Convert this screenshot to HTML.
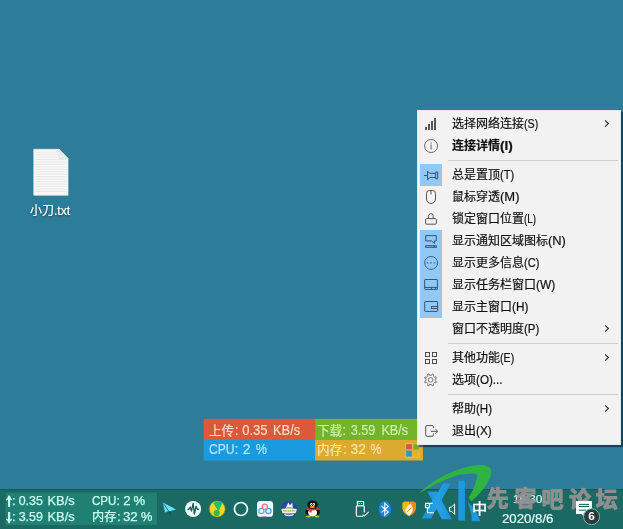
<!DOCTYPE html>
<html lang="zh-CN"><head><meta charset="utf-8"><title>Desktop</title>
<style>
html,body{margin:0;padding:0}
body{width:623px;height:529px;overflow:hidden;background:#2D7D9A;font-family:"Liberation Sans","Noto Sans CJK SC",sans-serif;position:relative}
#desktop{position:absolute;left:0;top:0;width:623px;height:529px;overflow:hidden;background:#2D7D9A}
svg{overflow:visible}
svg.tx{position:absolute;font-family:"Liberation Sans","Noto Sans CJK SC",sans-serif;will-change:transform}
#menu{position:absolute;left:417px;top:110px;width:202px;height:333px;background:#F2F2F2;border:1px solid #dfe8ec;box-shadow:2px 2px 1px rgba(10,30,45,.6)}
.mi{position:absolute;left:2px;width:198px;height:22px}
.chk{position:absolute;left:0;top:0;width:22px;height:22px;background:#90C8F6}
.ic{position:absolute;left:0;top:0}
.arr{position:absolute;left:184px;top:6px}
.sep{position:absolute;left:30px;width:170px;height:1px;background:#cfcfcf}
#file{position:absolute;left:0;top:0}
#fw{position:absolute;left:0;top:0}
#tb{position:absolute;left:0;top:489px;width:623px;height:40px;background:#1A6962;box-shadow:inset 0 1px 0 #125c5e}

</style></head>
<body>
<div id="desktop">
<div id="file">
<svg width="36" height="48" style="position:absolute;left:33px;top:148px"><path d="M.8 1.3H26L35 10.5V47.2H.8Z" fill="#f8f8f8" stroke="#e2e6e9" stroke-width=".8"/><path d="M2.6 4.2H24.5" stroke="#e6e6e6" stroke-width=".9"/><path d="M2.6 6.7H24.5" stroke="#e6e6e6" stroke-width=".9"/><path d="M2.6 9.1H24.5" stroke="#e6e6e6" stroke-width=".9"/><path d="M2.6 11.6H33.2" stroke="#e6e6e6" stroke-width=".9"/><path d="M2.6 14.0H33.2" stroke="#e6e6e6" stroke-width=".9"/><path d="M2.6 16.4H33.2" stroke="#e6e6e6" stroke-width=".9"/><path d="M2.6 18.9H33.2" stroke="#e6e6e6" stroke-width=".9"/><path d="M2.6 21.4H33.2" stroke="#e6e6e6" stroke-width=".9"/><path d="M2.6 23.8H33.2" stroke="#e6e6e6" stroke-width=".9"/><path d="M2.6 26.2H33.2" stroke="#e6e6e6" stroke-width=".9"/><path d="M2.6 28.7H33.2" stroke="#e6e6e6" stroke-width=".9"/><path d="M2.6 31.2H33.2" stroke="#e6e6e6" stroke-width=".9"/><path d="M2.6 33.6H33.2" stroke="#e6e6e6" stroke-width=".9"/><path d="M2.6 36.1H33.2" stroke="#e6e6e6" stroke-width=".9"/><path d="M2.6 38.5H33.2" stroke="#e6e6e6" stroke-width=".9"/><path d="M2.6 41.0H33.2" stroke="#e6e6e6" stroke-width=".9"/><path d="M2.6 43.4H33.2" stroke="#e6e6e6" stroke-width=".9"/><path d="M26 1.3V10.5H35Z" fill="#ececec" stroke="#d8dadc" stroke-width=".6"/></svg>
<svg class="tx" style="left:30px;top:203px;filter:drop-shadow(0 1px 1.2px rgba(0,0,0,.45))" width="42" height="17" fill="#fff"><text x="0.00" y="12" font-size="12" textLength="24" lengthAdjust="spacingAndGlyphs" stroke="#fff" stroke-width="0.2">小刀</text><text x="24.00" y="12" font-size="12" textLength="16.2" lengthAdjust="spacingAndGlyphs" stroke="#fff" stroke-width="0.2">.txt</text></svg>
</div>
<div id="fw">
<svg class="tx" style="left:0;top:0" width="623" height="529"><rect x="203.7" y="418.8" width="111.4" height="21.2" fill="#D9593A"/><rect x="315.1" y="418.8" width="107.9" height="21.2" fill="#74B42B"/><rect x="203.7" y="440.0" width="111.4" height="20.5" fill="#1A9BE0"/><rect x="315.1" y="440.0" width="107.9" height="20.5" fill="#DCAA2E"/><rect x="405.9" y="443.8" width="13.4" height="13.7" fill="#E0B436" stroke="#D9C070" stroke-width=".8"/><rect x="406.2" y="444.2" width="5.7" height="5" fill="#D9553A"/><rect x="413.5" y="444.2" width="5.4" height="5.4" fill="#6FAE2E"/><rect x="406.2" y="450.7" width="5.7" height="5.8" fill="#1E9AE0"/><rect x="413.5" y="450.7" width="5.4" height="5.8" fill="#E2B233"/></svg>
<svg class="tx" style="left:209.0px;top:421.67px;" width="93" height="19" fill="#FBDCC9"><text x="0.00" y="13.33" font-size="12.6" textLength="25.2" lengthAdjust="spacingAndGlyphs" stroke="#FBDCC9" stroke-width="0.15">上传</text><text x="25.70" y="13.33" font-size="13.9" textLength="3.9" lengthAdjust="spacingAndGlyphs" stroke="#FBDCC9" stroke-width="0.15">:</text><text x="33.20" y="13.33" font-size="13.9" textLength="25.3" lengthAdjust="spacingAndGlyphs" stroke="#FBDCC9" stroke-width="0.15">0.35</text><text x="64.10" y="13.33" font-size="13.9" textLength="27.0" lengthAdjust="spacingAndGlyphs" stroke="#FBDCC9" stroke-width="0.15">KB/s</text></svg>
<svg class="tx" style="left:317.3px;top:421.67px;" width="92" height="19" fill="#CDEFB0"><text x="0.00" y="13.33" font-size="12.6" textLength="25.2" lengthAdjust="spacingAndGlyphs" stroke="#CDEFB0" stroke-width="0.15">下载</text><text x="25.30" y="13.33" font-size="13.9" textLength="3.9" lengthAdjust="spacingAndGlyphs" stroke="#CDEFB0" stroke-width="0.15">:</text><text x="33.70" y="13.33" font-size="13.9" textLength="24.7" lengthAdjust="spacingAndGlyphs" stroke="#CDEFB0" stroke-width="0.15">3.59</text><text x="64.40" y="13.33" font-size="13.9" textLength="26.6" lengthAdjust="spacingAndGlyphs" stroke="#CDEFB0" stroke-width="0.15">KB/s</text></svg>
<svg class="tx" style="left:209.2px;top:440.67px;" width="59" height="19" fill="#B9E6FA"><text x="0.00" y="13.33" font-size="13.9" textLength="25.6" lengthAdjust="spacingAndGlyphs" stroke="#B9E6FA" stroke-width="0.15">CPU</text><text x="25.50" y="13.33" font-size="13.9" textLength="3.9" lengthAdjust="spacingAndGlyphs" stroke="#B9E6FA" stroke-width="0.15">:</text><text x="33.70" y="13.33" font-size="13.9" textLength="7.8" lengthAdjust="spacingAndGlyphs" stroke="#B9E6FA" stroke-width="0.15">2</text><text x="46.70" y="13.33" font-size="13.9" textLength="11.2" lengthAdjust="spacingAndGlyphs" stroke="#B9E6FA" stroke-width="0.15">%</text></svg>
<svg class="tx" style="left:316.7px;top:440.97px;" width="66" height="19" fill="#FBE7A8"><text x="0.00" y="13.33" font-size="12.6" textLength="25.2" lengthAdjust="spacingAndGlyphs" stroke="#FBE7A8" stroke-width="0.15">内存</text><text x="25.90" y="13.33" font-size="13.9" textLength="3.9" lengthAdjust="spacingAndGlyphs" stroke="#FBE7A8" stroke-width="0.15">:</text><text x="33.60" y="13.33" font-size="13.9" textLength="15.2" lengthAdjust="spacingAndGlyphs" stroke="#FBE7A8" stroke-width="0.15">32</text><text x="53.60" y="13.33" font-size="13.9" textLength="10.9" lengthAdjust="spacingAndGlyphs" stroke="#FBE7A8" stroke-width="0.15">%</text></svg>
</div>
<div id="tb">
<svg class="tx" style="left:0;top:0" width="160" height="40"><rect x="5.6" y="3.6" width="151.4" height="32.5" fill="#218074"/></svg>
<svg class="tx" style="left:0;top:0" width="20" height="40" viewBox="0 489 20 40" fill="none" stroke="#C8FFF0"><path d="M9.1 507V497" stroke-width="2.1"/><path d="M6.4 499.7Q8.7 498.8 9.1 495.7Q9.5 498.8 11.8 499.7" stroke-width="1.5"/><path d="M9.1 512V521.8" stroke-width="2.1"/><path d="M6.4 519.1Q8.7 520 9.1 523.1Q9.5 520 11.8 519.1" stroke-width="1.5"/></svg>
<svg class="tx" style="left:12.1px;top:3.3699999999999886px;" width="64" height="19" fill="#C8FFF0"><text x="0.00" y="13.33" font-size="12.6" textLength="3.5" lengthAdjust="spacingAndGlyphs" stroke="#C8FFF0" stroke-width="0.25">:</text><text x="6.70" y="13.33" font-size="12.6" textLength="24.2" lengthAdjust="spacingAndGlyphs" stroke="#C8FFF0" stroke-width="0.25">0.35</text><text x="35.50" y="13.33" font-size="12.6" textLength="27.2" lengthAdjust="spacingAndGlyphs" stroke="#C8FFF0" stroke-width="0.25">KB/s</text></svg>
<svg class="tx" style="left:12.1px;top:19.469999999999956px;" width="64" height="19" fill="#C8FFF0"><text x="0.00" y="13.33" font-size="12.6" textLength="3.5" lengthAdjust="spacingAndGlyphs" stroke="#C8FFF0" stroke-width="0.25">:</text><text x="6.70" y="13.33" font-size="12.6" textLength="24.2" lengthAdjust="spacingAndGlyphs" stroke="#C8FFF0" stroke-width="0.25">3.59</text><text x="35.50" y="13.33" font-size="12.6" textLength="27.2" lengthAdjust="spacingAndGlyphs" stroke="#C8FFF0" stroke-width="0.25">KB/s</text></svg>
<svg class="tx" style="left:92.0px;top:3.3699999999999886px;" width="55" height="19" fill="#C8FFF0"><text x="0.00" y="13.33" font-size="12.6" textLength="27.6" lengthAdjust="spacingAndGlyphs" stroke="#C8FFF0" stroke-width="0.25">CPU:</text><text x="31.20" y="13.33" font-size="12.6" textLength="7.4" lengthAdjust="spacingAndGlyphs" stroke="#C8FFF0" stroke-width="0.25">2</text><text x="41.60" y="13.33" font-size="12.6" textLength="11.6" lengthAdjust="spacingAndGlyphs" stroke="#C8FFF0" stroke-width="0.25">%</text></svg>
<svg class="tx" style="left:91.8px;top:19.469999999999956px;" width="62" height="19" fill="#C8FFF0"><text x="0.00" y="13.33" font-size="12.2" textLength="24.4" lengthAdjust="spacingAndGlyphs" stroke="#C8FFF0" stroke-width="0.25">内存</text><text x="25.00" y="13.33" font-size="12.6" textLength="3.7" lengthAdjust="spacingAndGlyphs" stroke="#C8FFF0" stroke-width="0.25">:</text><text x="30.90" y="13.33" font-size="12.6" textLength="14.8" lengthAdjust="spacingAndGlyphs" stroke="#C8FFF0" stroke-width="0.25">32</text><text x="49.10" y="13.33" font-size="12.6" textLength="11.4" lengthAdjust="spacingAndGlyphs" stroke="#C8FFF0" stroke-width="0.25">%</text></svg>
</div>
<svg class="tx" style="left:0;top:0;opacity:.94" width="623" height="529"><defs><linearGradient id="wb" x1="0" y1="0" x2="1" y2="0"><stop offset="0" stop-color="#1B93DF"/><stop offset=".5" stop-color="#25A6F0"/><stop offset="1" stop-color="#1B93DF"/></linearGradient></defs><path d="M418 494Q430 483 444 475.6Q459 468.2 473 465.4Q484 463.6 489 467Q492.6 470.2 490.4 476.4Q488 483 483 489.6Q478 496 471.4 501.2L468.6 497.4Q472.4 492 474 487.6Q476.6 480.6 477.2 476.6Q477.4 473.2 472.6 473.4Q466 473.6 458 475Q447 478.4 437 483.6Q426 489.6 418 494Z" fill="#2FB83A"/><path d="M427.3 491.5H436.9L451.9 519.2H441.8Z" fill="url(#wb)"/><path d="M443.2 483.6H451.2L430.9 518.6H421.5Z" fill="url(#wb)"/><path d="M458.3 480.7H464.9V520.6H458.3Z" fill="#1E9CE8"/><path d="M467.4 502Q476 508 480.2 521.2H471.8Q471.4 510 467.4 502Z" fill="#1E9CE8"/></svg>
<svg class="tx" style="left:0;top:0" width="623" height="529"><path d="M162.3 501.8L176.7 509.4L170.4 511.5L170.5 515.7L168.4 511.2L164.9 513.1Z" fill="#62E5F6" stroke="#12494f" stroke-width=".5" stroke-linejoin="round"/><path d="M163.6 503.6L168.5 511" fill="none" stroke="#15535a" stroke-width=".8"/><path d="M168.4 511.1L170.5 515.8L170.5 511.5Z" fill="#0d3f45"/><circle cx="193.1" cy="509" r="8" fill="#F3FFFC"/><path d="M187.4 509.2h1.6l1.2-2.2l1.3 4l1.6-7.6l1.3 10.8l1.7-8l1.2 3h1.6" fill="none" stroke="#1d5f5d" stroke-width="1.35" stroke-linejoin="round"/><circle cx="217.2" cy="509" r="8" fill="#FAD71E" stroke="#4f9a2a" stroke-width=".6"/><circle cx="216.7" cy="513.1" r="3.1" fill="#22BD68"/><path d="M213.4 503Q218 500.2 222.6 502.2L219.3 509.9L217.8 511L217.2 509.6Z" fill="#22BD68"/><circle cx="240.9" cy="509" r="6.5" fill="none" stroke="#E9FFFA" stroke-width="1.7"/><rect x="257" y="501" width="16.1" height="15.8" rx="3.4" fill="#F2FCFF"/><circle cx="261.4" cy="511" r="2.6" fill="#e8f4ff" stroke="#62B0F4" stroke-width="1.3"/><circle cx="268.4" cy="511" r="2.6" fill="#e8f4ff" stroke="#4C9CEE" stroke-width="1.3"/><circle cx="264.8" cy="506.7" r="2.6" fill="#ffe9ec" stroke="#F0788F" stroke-width="1.3"/><rect x="262.6" y="516.3" width="4" height=".9" fill="#c9727a"/><circle cx="289.1" cy="509" r="8" fill="#2A47A8"/><path d="M285.4 508.6L288.4 502.4L290 505.2L292.4 502.6L292.8 508.6Z" fill="#fbeef0"/><path d="M286.8 507.4h4.6v1.6h-4.6z" fill="#9a5a3a"/><path d="M281.3 508.9Q289 507.8 296.9 508.9L295.8 513Q289 514 282.4 513Z" fill="#F6F3D6"/><path d="M283 510.9h12.2" stroke="#7fae3a" stroke-width="1.1" stroke-dasharray="1.6 .7"/><path d="M283.8 513.8Q289 515.6 294.4 513.8L293 515.6Q289 517 285 515.6Z" fill="#eef0dc"/><ellipse cx="312.6" cy="512" rx="7.3" ry="4.6" fill="#111"/><ellipse cx="312.6" cy="504.6" rx="5.3" ry="4" fill="#111"/><ellipse cx="312.6" cy="512.8" rx="4.4" ry="3.7" fill="#fff"/><ellipse cx="308.4" cy="516.5" rx="2.4" ry=".9" fill="#B9C92B"/><ellipse cx="316.9" cy="516.5" rx="2.4" ry=".9" fill="#B9C92B"/><path d="M306.6 508Q312.6 509.4 318.8 508L319 509.8Q312.6 511 311.8 510.4L311.6 512.4L309.4 512.2L309.6 510.4L306.5 509.8Z" fill="#E8352C"/><ellipse cx="311.3" cy="504.4" rx="1.1" ry="1.4" fill="#fff"/><ellipse cx="313.9" cy="504.4" rx="1.1" ry="1.4" fill="#fff"/><circle cx="311.6" cy="504.6" r=".5" fill="#111"/><circle cx="313.6" cy="504.6" r=".5" fill="#111"/><ellipse cx="312.4" cy="507" rx="2.6" ry="1" fill="#F5A21E"/><path d="M357.4 505.6V501.5H363.6V505.6" fill="none" stroke="#fff" stroke-width="1.15"/><path d="M358.6 502.9h1v1h-1zM361 502.9h1v1h-1z" fill="#fff"/><path d="M363 516.2H357.3a1 1 0 0 1-1-1V506.8a1 1 0 0 1 1-1H363.3a1 1 0 0 1 1 1V512.6" fill="none" stroke="#fff" stroke-width="1.15"/><path d="M362.5 514.6L364.3 516.1L368.7 511.9" fill="none" stroke="#e8f4f2" stroke-width="1.1"/><ellipse cx="384.9" cy="509.2" rx="6.2" ry="8.2" fill="#1B82E8"/><path d="M381.5 506L388.2 512L384.8 515.2V503.2L388.2 506.4L381.5 512.4" fill="none" stroke="#fff" stroke-width="1.1" stroke-linejoin="miter"/><path d="M402.4 502.6Q403.8 502.6 404.4 501.5H409.2V516.4Q403 513.6 402.4 508.6Z" fill="#F8B718"/><path d="M416 502.6Q414.6 502.6 414 501.5H409.2V516.4Q415.4 513.6 416 508.6Z" fill="#EF8B1E"/><path d="M410.4 503.4Q413.6 507.6 412.4 511.6Q411.2 514.4 409.2 515.4Q405.4 513.6 405.4 510.6Q405.8 507 410.4 503.4Z" fill="#FFF6E4"/><path d="M407 512.2L411.4 507.6" stroke="#EF8B1E" stroke-width=".9"/><path d="M432.6 503.4H425.5V507.6H429.4V503.4M427.5 507.6V512.8H434" fill="none" stroke="#fff" stroke-width="1.1"/><path d="M426.6 505.4h1.8" stroke="#fff" stroke-width="1"/><path d="M449.5 507.2H451.4L454.6 504V514.4L451.4 511.2H449.5Z" fill="none" stroke="#fff" stroke-width="1"/></svg>
<svg class="tx" style="left:472.3px;top:499.00000000000006px;" width="17" height="21" fill="#fff"><text x="0.00" y="15.2" font-size="15.2" stroke="#fff" stroke-width="0.4">中</text></svg>
<svg class="tx" style="left:512.6px;top:491.40000000000003px;" width="31" height="17" fill="#DFFFFA"><text x="0.00" y="12.2" font-size="11.2" textLength="29.4" lengthAdjust="spacingAndGlyphs" stroke="#DFFFFA" stroke-width="0.15">16:30</text></svg>
<svg class="tx" style="left:501.7px;top:510.7px;" width="53" height="17" fill="#DFFFFA"><text x="0.00" y="12.2" font-size="12.2" textLength="51.4" lengthAdjust="spacingAndGlyphs" stroke="#DFFFFA" stroke-width="0.2">2020/8/6</text></svg>
<svg class="tx wmt" style="left:0;top:0" width="623" height="529" fill="#969094" stroke="#969094" stroke-width="1" stroke-linejoin="round" opacity=".95"><text x="486.65" y="505.86" font-size="22" font-weight="700">先</text><text x="514.39" y="505.94" font-size="22" font-weight="700">客</text><text x="541.62" y="506.5" font-size="22" font-weight="700">吧</text><text x="568.96" y="506.60" font-size="22" font-weight="700">论</text><text x="595.68" y="506.5" font-size="22" font-weight="700">坛</text></svg>
<svg class="tx" style="left:0;top:0" width="623" height="529"><path d="M576 501.1H591.9V514.1H584.6L583.6 516.2L581.4 514.1H576Z" fill="#F6FFFD"/><path d="M579 504.4H589M579 506.5H589M579 510.2H586" stroke="#1a5a5a" stroke-width="1"/><circle cx="591.6" cy="516.7" r="8" fill="#2C3A3D" stroke="#78C4B6" stroke-width=".9"/><text x="588.3" y="520.2" font-size="10.5" font-weight="700" fill="#fff" textLength="6.6" lengthAdjust="spacingAndGlyphs">6</text></svg>
<div id="menu">
<div class="mi" style="top:2px">
<svg class="ic" width="22" height="22"><path d="M5 14h2v3h-2zM8 11h2v6h-2zM11 8h2v9h-2zM14 5h2v12h-2z" fill="#555"/></svg>
<svg class="tx" style="left:32px;top:3px;" width="88" height="17" fill="#111"><text x="0.00" y="12" font-size="12" textLength="72" lengthAdjust="spacingAndGlyphs" stroke="#111" stroke-width="0.2">选择网络连接</text><text x="72.00" y="12" font-size="12" textLength="14.3" lengthAdjust="spacingAndGlyphs" stroke="#111" stroke-width="0.2">(S)</text></svg>
<svg class="arr" width="8" height="10"><path d="M1.1 1.4L4.4 4.5L1.1 7.6" fill="none" stroke="#333" stroke-width="1.2"/></svg>
</div>
<div class="mi" style="top:24px">
<svg class="ic" width="22" height="22"><circle cx="11.1" cy="11" r="6.5" fill="none" stroke="#666" stroke-width="1"/><path d="M10.6 9.6h1v4.8h-1zM10.6 7.2h1v1.3h-1z" fill="#666"/></svg>
<svg class="tx" style="left:32px;top:3px;" width="62" height="17" fill="#111"><text x="0.00" y="12" font-size="12" font-weight="700" textLength="48" lengthAdjust="spacingAndGlyphs" stroke="#111" stroke-width="0.2">连接详情</text><text x="48.00" y="12" font-size="12" textLength="12.8" lengthAdjust="spacingAndGlyphs" font-weight="700" stroke="#111" stroke-width="0.2">(I)</text></svg>
</div>
<div class="sep" style="top:49px"></div>
<div class="mi" style="top:53px">
<div class="chk"></div>
<svg class="ic" width="22" height="22"><path d="M4 11.5H7.5M7.5 7V16M7.5 7.3L10 9.4H15.7M7.5 15.6L10 13.5H15.7M15.7 8H17.7V14.8H15.7Z" fill="none" stroke="#355674" stroke-width="1"/></svg>
<svg class="tx" style="left:32px;top:3px;" width="64" height="17" fill="#111"><text x="0.00" y="12" font-size="12" textLength="48" lengthAdjust="spacingAndGlyphs" stroke="#111" stroke-width="0.2">总是置顶</text><text x="48.00" y="12" font-size="12" textLength="14.2" lengthAdjust="spacingAndGlyphs" stroke="#111" stroke-width="0.2">(T)</text></svg>
</div>
<div class="mi" style="top:75px">
<svg class="ic" width="22" height="22"><path d="M6.5 7.3a2.8 2.8 0 0 1 2.8-2.8h3.4a2.8 2.8 0 0 1 2.8 2.8v5.7a4.5 4.5 0 0 1-9 0z" fill="none" stroke="#555" stroke-width="1"/><path d="M10.95 4.9v3.7" fill="none" stroke="#8c8c8c" stroke-width="1.5"/></svg>
<svg class="tx" style="left:32px;top:3px;" width="69" height="17" fill="#111"><text x="0.00" y="12" font-size="12" textLength="48" lengthAdjust="spacingAndGlyphs" stroke="#111" stroke-width="0.2">鼠标穿透</text><text x="48.00" y="12" font-size="12" textLength="19.5" lengthAdjust="spacingAndGlyphs" stroke="#111" stroke-width="0.2">(M)</text></svg>
</div>
<div class="mi" style="top:97px">
<svg class="ic" width="22" height="22"><rect x="5.6" y="10.6" width="10.8" height="5.6" rx="1" fill="none" stroke="#555" stroke-width="1"/><path d="M8.6 10.6V8a2.3 2.3 0 0 1 4.6 0v2.6" fill="none" stroke="#555" stroke-width="1"/></svg>
<svg class="tx" style="left:32px;top:3px;" width="86" height="17" fill="#111"><text x="0.00" y="12" font-size="12" textLength="72" lengthAdjust="spacingAndGlyphs" stroke="#111" stroke-width="0.2">锁定窗口位置</text><text x="72.00" y="12" font-size="12" textLength="12.1" lengthAdjust="spacingAndGlyphs" stroke="#111" stroke-width="0.2">(L)</text></svg>
</div>
<div class="mi" style="top:119px">
<div class="chk"></div>
<svg class="ic" width="22" height="22"><path d="M5.7 5.6H16.3V10.9H14.4V13.4L11.4 10.9H5.7Z" fill="none" stroke="#355674" stroke-width="1"/><rect x="5.7" y="15.7" width="10.6" height="1.6" fill="none" stroke="#355674" stroke-width="1"/><path d="M14.2 15.5v2" fill="none" stroke="#355674" stroke-width="1"/></svg>
<svg class="tx" style="left:32px;top:3px;" width="115" height="17" fill="#111"><text x="0.00" y="12" font-size="12" textLength="96" lengthAdjust="spacingAndGlyphs" stroke="#111" stroke-width="0.2">显示通知区域图标</text><text x="96.00" y="12" font-size="12" textLength="17.9" lengthAdjust="spacingAndGlyphs" stroke="#111" stroke-width="0.2">(N)</text></svg>
</div>
<div class="mi" style="top:141px">
<div class="chk"></div>
<svg class="ic" width="22" height="22"><circle cx="11.1" cy="10.9" r="6.5" fill="none" stroke="#3f6488" stroke-width="1"/><path d="M6.8 10.2h1.4v1.4h-1.4zM10.3 10.2h1.4v1.4h-1.4zM13.8 10.2h1.4v1.4h-1.4z" fill="#3f6488"/></svg>
<svg class="tx" style="left:32px;top:3px;" width="89" height="17" fill="#111"><text x="0.00" y="12" font-size="12" textLength="72" lengthAdjust="spacingAndGlyphs" stroke="#111" stroke-width="0.2">显示更多信息</text><text x="72.00" y="12" font-size="12" textLength="15.4" lengthAdjust="spacingAndGlyphs" stroke="#111" stroke-width="0.2">(C)</text></svg>
</div>
<div class="mi" style="top:163px">
<div class="chk"></div>
<svg class="ic" width="22" height="22"><rect x="4.7" y="5.5" width="12.7" height="9.9" rx=".5" fill="none" stroke="#355674" stroke-width="1"/><path d="M4.7 13.4H17.4M11.4 13.4v2M15.4 13.4v2" fill="none" stroke="#355674" stroke-width="1"/></svg>
<svg class="tx" style="left:32px;top:3px;" width="105" height="17" fill="#111"><text x="0.00" y="12" font-size="12" textLength="84" lengthAdjust="spacingAndGlyphs" stroke="#111" stroke-width="0.2">显示任务栏窗口</text><text x="84.00" y="12" font-size="12" textLength="19.3" lengthAdjust="spacingAndGlyphs" stroke="#111" stroke-width="0.2">(W)</text></svg>
</div>
<div class="mi" style="top:185px">
<div class="chk"></div>
<svg class="ic" width="22" height="22"><rect x="4.7" y="5.5" width="12.9" height="9.9" rx=".6" fill="none" stroke="#355674" stroke-width="1"/><rect x="11.5" y="10.5" width="6.1" height="2" fill="none" stroke="#355674" stroke-width="1"/></svg>
<svg class="tx" style="left:32px;top:3px;" width="78" height="17" fill="#111"><text x="0.00" y="12" font-size="12" textLength="60" lengthAdjust="spacingAndGlyphs" stroke="#111" stroke-width="0.2">显示主窗口</text><text x="60.00" y="12" font-size="12" textLength="16.4" lengthAdjust="spacingAndGlyphs" stroke="#111" stroke-width="0.2">(H)</text></svg>
</div>
<div class="mi" style="top:207px">
<svg class="tx" style="left:32px;top:3px;" width="89" height="17" fill="#111"><text x="0.00" y="12" font-size="12" textLength="72" lengthAdjust="spacingAndGlyphs" stroke="#111" stroke-width="0.2">窗口不透明度</text><text x="72.00" y="12" font-size="12" textLength="15.3" lengthAdjust="spacingAndGlyphs" stroke="#111" stroke-width="0.2">(P)</text></svg>
<svg class="arr" width="8" height="10"><path d="M1.1 1.4L4.4 4.5L1.1 7.6" fill="none" stroke="#333" stroke-width="1.2"/></svg>
</div>
<div class="sep" style="top:232px"></div>
<div class="mi" style="top:236px">
<svg class="ic" width="22" height="22"><rect x="5.5" y="5.5" width="4" height="4" fill="none" stroke="#4d4d4d" stroke-width="1"/><rect x="5.5" y="12.5" width="4" height="4" fill="none" stroke="#4d4d4d" stroke-width="1"/><rect x="12.5" y="5.5" width="4" height="4" fill="none" stroke="#4d4d4d" stroke-width="1"/><rect x="12.5" y="12.5" width="4" height="4" fill="none" stroke="#4d4d4d" stroke-width="1"/></svg>
<svg class="tx" style="left:32px;top:3px;" width="64" height="17" fill="#111"><text x="0.00" y="12" font-size="12" textLength="48" lengthAdjust="spacingAndGlyphs" stroke="#111" stroke-width="0.2">其他功能</text><text x="48.00" y="12" font-size="12" textLength="14.2" lengthAdjust="spacingAndGlyphs" stroke="#111" stroke-width="0.2">(E)</text></svg>
<svg class="arr" width="8" height="10"><path d="M1.1 1.4L4.4 4.5L1.1 7.6" fill="none" stroke="#333" stroke-width="1.2"/></svg>
</div>
<div class="mi" style="top:258px">
<svg class="ic" width="22" height="22"><path d="M11.17 6.24 L11.66 6.32 L12.26 4.93 L13.65 5.50 L13.09 6.91 L13.49 7.20 L14.30 8.01 L14.59 8.41 L16.00 7.85 L16.57 9.24 L15.18 9.84 L15.26 10.33 L15.26 11.47 L15.18 11.96 L16.57 12.56 L16.00 13.95 L14.59 13.39 L14.30 13.79 L13.49 14.60 L13.09 14.89 L13.65 16.30 L12.26 16.87 L11.66 15.48 L11.17 15.56 L10.03 15.56 L9.54 15.48 L8.94 16.87 L7.55 16.30 L8.11 14.89 L7.71 14.60 L6.90 13.79 L6.61 13.39 L5.20 13.95 L4.63 12.56 L6.02 11.96 L5.94 11.47 L5.94 10.33 L6.02 9.84 L4.63 9.24 L5.20 7.85 L6.61 8.41 L6.90 8.01 L7.71 7.20 L8.11 6.91 L7.55 5.50 L8.94 4.93 L9.54 6.32 L10.03 6.24Z" fill="none" stroke="#777" stroke-width="1" stroke-linejoin="round"/><circle cx="10.6" cy="10.9" r="2.3" fill="none" stroke="#777" stroke-width="1"/></svg>
<svg class="tx" style="left:32px;top:3px;" width="52" height="17" fill="#111"><text x="0.00" y="12" font-size="12" textLength="24" lengthAdjust="spacingAndGlyphs" stroke="#111" stroke-width="0.2">选项</text><text x="24.00" y="12" font-size="12" textLength="26.6" lengthAdjust="spacingAndGlyphs" stroke="#111" stroke-width="0.2">(O)...</text></svg>
</div>
<div class="sep" style="top:283px"></div>
<div class="mi" style="top:287px">
<svg class="tx" style="left:32px;top:3px;" width="42" height="17" fill="#111"><text x="0.00" y="12" font-size="12" textLength="24" lengthAdjust="spacingAndGlyphs" stroke="#111" stroke-width="0.2">帮助</text><text x="24.00" y="12" font-size="12" textLength="16.1" lengthAdjust="spacingAndGlyphs" stroke="#111" stroke-width="0.2">(H)</text></svg>
<svg class="arr" width="8" height="10"><path d="M1.1 1.4L4.4 4.5L1.1 7.6" fill="none" stroke="#333" stroke-width="1.2"/></svg>
</div>
<div class="mi" style="top:309px">
<svg class="ic" width="22" height="22"><path d="M13.5 8.2V7a1.5 1.5 0 0 0-1.5-1.5H7.2a1.5 1.5 0 0 0-1.5 1.5V14.8a1.5 1.5 0 0 0 1.5 1.5H12a1.5 1.5 0 0 0 1.5-1.5V13.4M11 11.3H17.5M15.3 9L17.7 11.3L15.3 13.6" fill="none" stroke="#555" stroke-width="1"/></svg>
<svg class="tx" style="left:32px;top:3px;" width="41" height="17" fill="#111"><text x="0.00" y="12" font-size="12" textLength="24" lengthAdjust="spacingAndGlyphs" stroke="#111" stroke-width="0.2">退出</text><text x="24.00" y="12" font-size="12" textLength="15.8" lengthAdjust="spacingAndGlyphs" stroke="#111" stroke-width="0.2">(X)</text></svg>
</div>
</div>
</div>
</body></html>
